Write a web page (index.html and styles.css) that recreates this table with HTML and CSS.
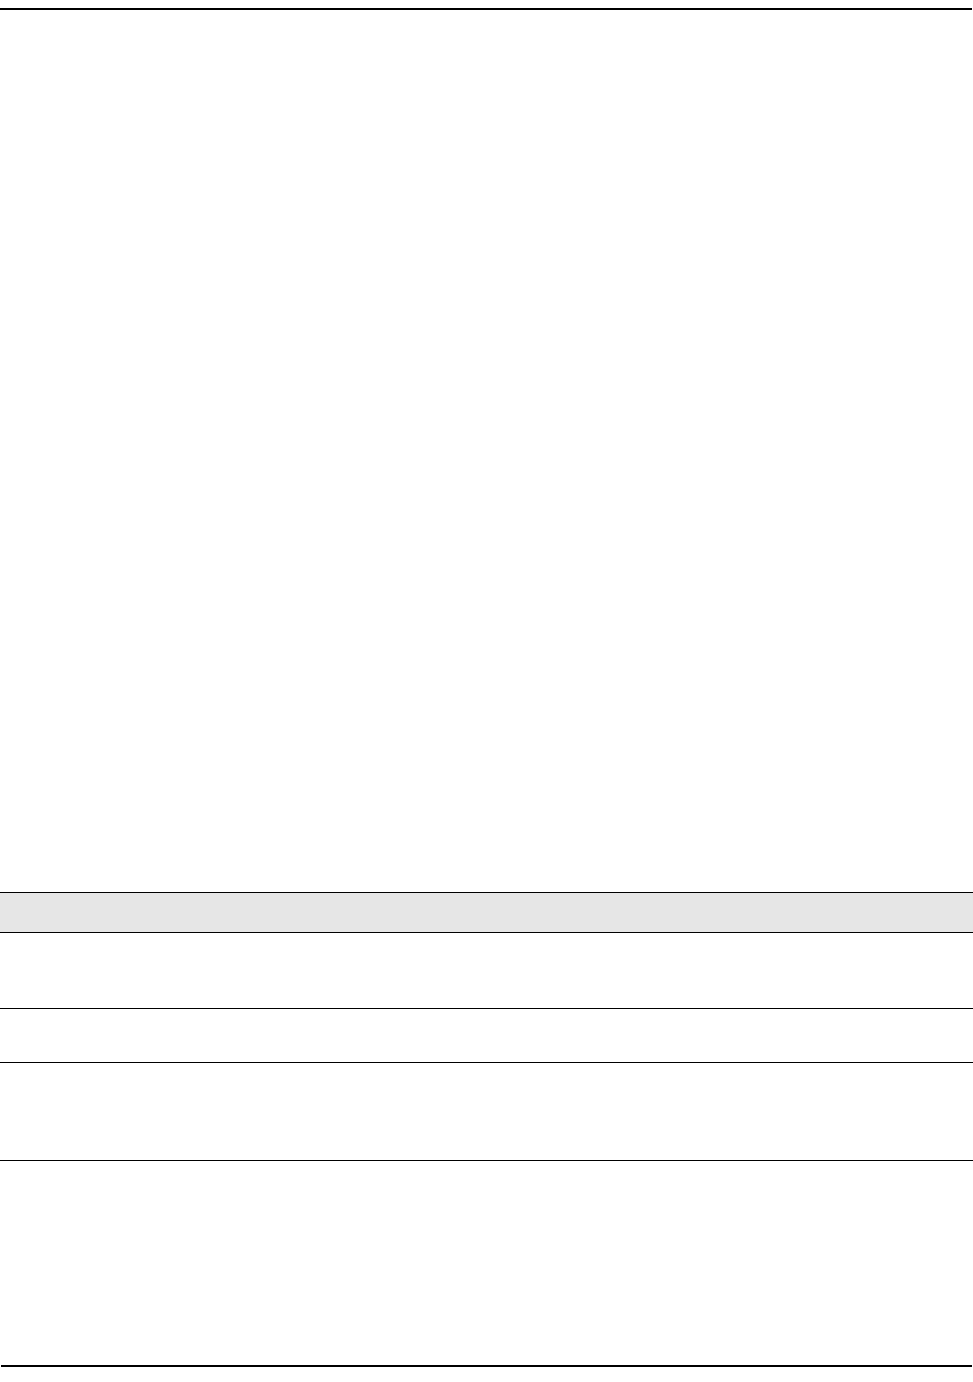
FILE: index.html
```html
<!DOCTYPE html>
<html lang="en">
  <head>
    <meta charset="UTF-8" />
    <meta name="viewport" content="width=device-width, initial-scale=1.0" />
    <title>Page</title>
    <link rel="stylesheet" href="styles.css">
  </head>
  <body>
    <div class="page">
      <div class="rule rule-top"></div>

      <div class="page-body"></div>

      <div class="table">
        <div class="table-head"></div>
        <div class="table-row row-1"></div>
        <div class="table-row row-2"></div>
        <div class="table-row row-3"></div>
      </div>

      <div class="page-rest"></div>

      <div class="rule rule-bottom"></div>
    </div>
  </body>
</html>
```

FILE: styles.css
```css
* {
  margin: 0;
  padding: 0;
  box-sizing: border-box;
}

body {
  background-color: #fff;
  font-family: "Liberation Sans", Arial, sans-serif;
  color: #000;
}

.page {
  padding-top: 8px;
}

.rule {
  height: 2px;
  margin-right: 1px;
  background-color: #000;
}

.page-body {
  height: 882px;
}

.table {
  border-top: 1px solid #000;
}

.table-head {
  height: 40px;
  background-color: #e6e6e6;
  border-bottom: 1px solid #000;
}

.table-row {
  border-bottom: 1px solid #000;
}

.row-1 {
  height: 76px;
}

.row-2 {
  height: 54px;
}

.row-3 {
  height: 98px;
}

.page-rest {
  height: 204px;
}

.rule-bottom {
  margin-left: 1px;
}
```
